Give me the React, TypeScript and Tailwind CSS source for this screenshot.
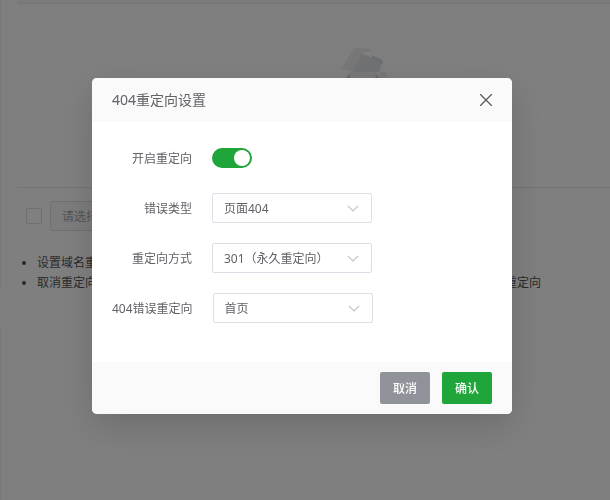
import { useState } from "react";
import type { ReactNode } from "react";

type FieldProps = {
  id: string;
  label: string;
  children: ReactNode;
};

function Field({ id, label, children }: FieldProps) {
  return (
    <div className="flex h-[30px] items-center">
      <label htmlFor={id} className="mr-5 min-w-20 shrink-0 pt-0.5 text-right">
        {label}
      </label>
      {children}
    </div>
  );
}

type SelectFieldProps = {
  id: string;
  label: string;
  options: string[];
};

function SelectField({ id, label, options }: SelectFieldProps) {
  return (
    <Field id={id} label={label}>
      <div className="relative w-40">
        <select
          id={id}
          className="h-[30px] w-full appearance-none rounded-xs border border-[#dcdfe6] bg-white pt-0.5 pr-8 pl-[11px] outline-none"
        >
          {options.map((option) => (
            <option key={option}>{option}</option>
          ))}
        </select>
        <svg
          className="pointer-events-none absolute top-3 right-[13px] h-2 w-3"
          viewBox="0 0 12 8"
          fill="none"
          stroke="#c0c4cc"
          strokeWidth="1.1"
        >
          <path d="M1 1 L6 6 L11 1" />
        </svg>
      </div>
    </Field>
  );
}

function EmptyBox() {
  return (
    <svg className="mx-auto h-[100px] w-[120px]" viewBox="0 0 120 100">
      <path d="M44 0 L58 0 L62 3 L51 5 L43 24 L32 21 L38 9 Z" fill="#eeeff1" />
      <path d="M51 5 L61 9 L72 15 L69 24 L43 24 Z" fill="#e3e5e9" />
      <path d="M61 7 L71 11 L73 14 L72 17 L63 11 Z" fill="#dadce1" />
      <path d="M40 24 L66 24 L70 30 L70 92 L36 92 L36 30 Z" fill="#f2f3f5" />
      <path d="M40 25 L40 30 L36 30 Z M65 25 L69 30 L66 30 Z" fill="#d3d5db" />
      <path d="M69 24 L76 24 L79 30 L70 30 Z" fill="#f0f1f3" />
    </svg>
  );
}

function RedirectPage() {
  return (
    <div className="flex min-h-screen overflow-hidden">
      <div className="flex w-px shrink-0 flex-col">
        <div className="h-72 bg-[#f0f0f0]" />
        <div className="mt-10 grow bg-[#f0f0f0]" />
      </div>
      <main className="min-w-[722px] grow pl-4">
        <div className="h-1 border-b border-[#ebeef5] bg-[#f7f7f7]" />
        <div className="h-[184px] border-b border-[#e6e8ee] pt-11">
          <EmptyBox />
        </div>
        <div className="flex items-center gap-2 pt-[13px] pl-[9px]">
          <input
            type="checkbox"
            aria-label="全选"
            className="size-4 appearance-none rounded-xs border border-[#dcdfe6] bg-white"
          />
          <select
            aria-label="批量操作"
            className="h-[30px] w-32 appearance-none rounded-xs border border-[#dcdfe6] bg-[#f8f8f8] pt-0.5 pl-[11px] text-[#a8abb2]"
          >
            <option>请选择批量操作</option>
          </select>
        </div>
        <ul className="mt-[22px] list-disc pl-5 leading-5 text-[#555]">
          <li>设置域名重定向后，该域名的404重定向将失效</li>
          <li>取消重定向后，请清空浏览器缓存再访问，以免仍按照旧规则跳转；如需启用请重新开启重定向</li>
        </ul>
      </main>
    </div>
  );
}

function RedirectDialog() {
  const [enabled, setEnabled] = useState(true);

  return (
    <div
      role="dialog"
      aria-labelledby="dialog-title"
      className="w-[420px] overflow-hidden rounded-[5px] bg-white shadow-[0_12px_36px_rgba(0,0,0,0.15)]"
    >
      <header className="flex h-11 items-center justify-between bg-[#fafafa] px-5">
        <h2 id="dialog-title" className="text-sm">
          404重定向设置
        </h2>
        <button type="button" aria-label="关闭">
          <svg className="size-3" viewBox="0 0 12 12" fill="none" stroke="#606266" strokeWidth="1.4">
            <path d="M0 0 L12 12 M12 0 L0 12" />
          </svg>
        </button>
      </header>

      <div className="flex flex-col gap-5 px-5 pt-[21px] pb-[39px]">
        <Field id="enabled" label="开启重定向">
          <input
            id="enabled"
            type="checkbox"
            role="switch"
            checked={enabled}
            onChange={(event) => setEnabled(event.target.checked)}
            className="h-5 w-10 appearance-none rounded-full bg-[#dcdfe6] p-0.5 before:block before:size-4 before:rounded-full before:bg-white checked:bg-[#20a53a] checked:before:ml-5"
          />
        </Field>
        <SelectField id="type" label="错误类型" options={["页面404"]} />
        <SelectField
          id="mode"
          label="重定向方式"
          options={["301（永久重定向）", "302（临时重定向）"]}
        />
        <SelectField id="target" label="404错误重定向" options={["首页", "自定义"]} />
      </div>

      <footer className="flex justify-end gap-3 bg-[#fafafa] px-5 py-2.5 font-medium text-white">
        <button type="button" className="h-8 w-[50px] rounded-xs bg-[#909399] pt-0.5">
          取消
        </button>
        <button type="button" className="h-8 w-[50px] rounded-xs bg-[#20a53a] pt-0.5">
          确认
        </button>
      </footer>
    </div>
  );
}

export default function App() {
  return (
    <div className="bg-white font-['Noto_Sans','Noto_Sans_CJK_SC',sans-serif] text-xs text-[#606266]">
      <RedirectPage />
      <div className="fixed inset-0 flex items-center justify-center bg-black/50 pr-1.5 pb-2">
        <RedirectDialog />
      </div>
    </div>
  );
}
